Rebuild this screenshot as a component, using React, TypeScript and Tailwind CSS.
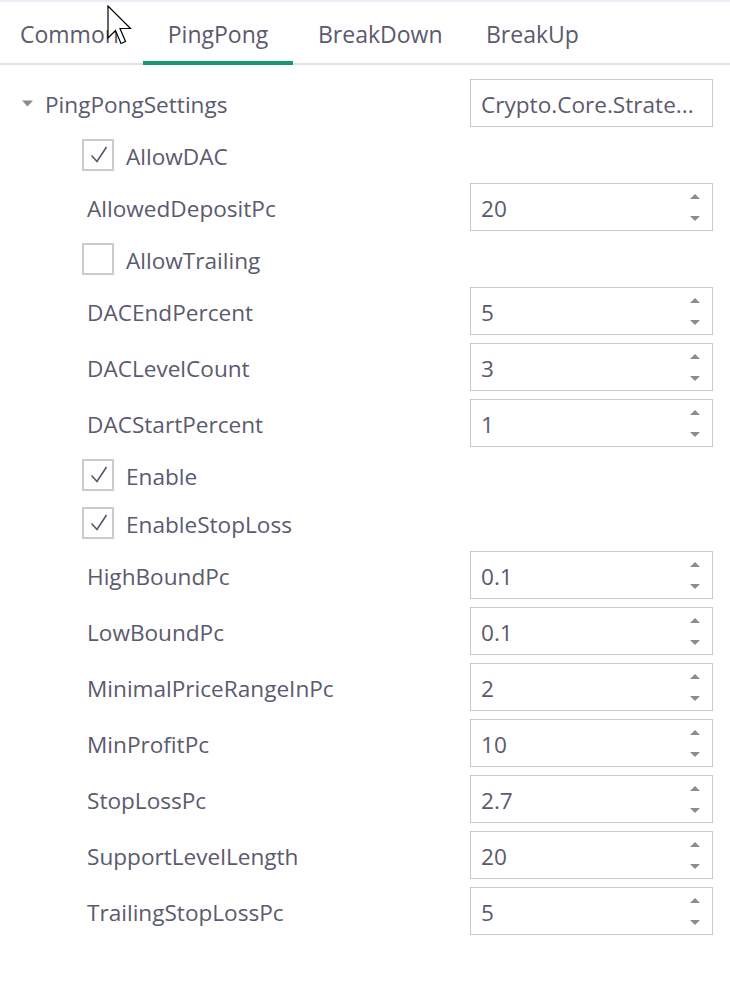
import React from "react";

const font = { fontFamily: '"Open Sans", "Noto Sans", sans-serif' };

type Row =
  | { kind: "input"; label: string; value: string }
  | { kind: "check"; label: string; checked: boolean };

const rows: Row[] = [
  { kind: "check", label: "AllowDAC", checked: true },
  { kind: "input", label: "AllowedDepositPc", value: "20" },
  { kind: "check", label: "AllowTrailing", checked: false },
  { kind: "input", label: "DACEndPercent", value: "5" },
  { kind: "input", label: "DACLevelCount", value: "3" },
  { kind: "input", label: "DACStartPercent", value: "1" },
  { kind: "check", label: "Enable", checked: true },
  { kind: "check", label: "EnableStopLoss", checked: true },
  { kind: "input", label: "HighBoundPc", value: "0.1" },
  { kind: "input", label: "LowBoundPc", value: "0.1" },
  { kind: "input", label: "MinimalPriceRangeInPc", value: "2" },
  { kind: "input", label: "MinProfitPc", value: "10" },
  { kind: "input", label: "StopLossPc", value: "2.7" },
  { kind: "input", label: "SupportLevelLength", value: "20" },
  { kind: "input", label: "TrailingStopLossPc", value: "5" },
];

function Spinner() {
  return (
    <div className="absolute right-[12px] top-0 flex h-full w-[10px] flex-col">
      <svg width="10" height="5" viewBox="0 0 10 5" className="mt-[10px]">
        <polygon points="5,0 10,5 0,5" fill="#8b8b92" />
      </svg>
      <svg width="10" height="5" viewBox="0 0 10 5" className="mt-[17px]">
        <polygon points="0,0 10,0 5,5" fill="#8b8b92" />
      </svg>
    </div>
  );
}

function NumberBox({ value }: { value: string }) {
  return (
    <div className="relative flex h-[48px] w-[243px] items-center border border-[#c9c9c9] pl-[10px] pt-[4px] text-[#5b5a6e]">
      <span>{value}</span>
      <Spinner />
    </div>
  );
}

function CheckBox({ checked }: { checked: boolean }) {
  return (
    <div className="flex h-[32px] w-[32px] items-center justify-center border-2 border-[#cbcbcb] bg-white">
      {checked && (
        <svg width="28" height="28" viewBox="0 0 28 28">
          <polyline
            points="7.5,14.5 13,20.5 22.5,6"
            fill="none"
            stroke="#55566a"
            strokeWidth="1.6"
          />
        </svg>
      )}
    </div>
  );
}

export default function App() {
  return (
    <div
      className="relative h-[1004px] w-[730px] overflow-hidden border-t-2 border-[#e9eef7] bg-white text-[#5b5a6e]"
      style={font}
    >
      {/* tabs */}
      <div className="flex h-[63px] border-b-2 border-[#e3e3e3] text-[23px]">
        <div className="flex w-[143px] items-center pl-[20px] pt-[4px]">Common</div>
        <div className="relative flex w-[150px] items-center justify-center pt-[4px]">
          PingPong
          <div className="absolute bottom-[-2px] left-0 h-[4px] w-full bg-[#17996b]" />
        </div>
        <div className="flex w-[169px] items-center pl-[25px] pt-[4px]">BreakDown</div>
        <div className="flex items-center pl-[24px] pt-[4px]">BreakUp</div>
      </div>

      {/* tree */}
      <div className="pt-[10px] text-[22.6px]">
        <div className="flex h-[56px] items-center">
          <div className="flex w-[45px] items-center pl-[22px]">
            <svg width="11" height="7" viewBox="0 0 11 7">
              <polygon points="0,0.5 11,0.5 5.5,6.5" fill="#8a8a8f" />
            </svg>
          </div>
          <div className="flex-1 pt-[4px]">PingPongSettings</div>
          <div className="mr-[17px] flex h-[48px] w-[243px] items-center overflow-hidden whitespace-nowrap border border-[#c9c9c9] pl-[10px] pt-[4px]">
            Crypto.Core.Strate...
          </div>
        </div>

        {rows.map((r) =>
          r.kind === "input" ? (
            <div key={r.label} className="flex h-[56px] items-center">
              <div className="flex-1 pl-[87px] pt-[4px]">{r.label}</div>
              <div className="mr-[17px]">
                <NumberBox value={r.value} />
              </div>
            </div>
          ) : (
            <div key={r.label} className="flex h-[48px] items-center pl-[82px]">
              <CheckBox checked={r.checked} />
              <span className="ml-[12px] pt-[4px]">{r.label}</span>
            </div>
          )
        )}
      </div>

      {/* mouse cursor */}
      <svg
        className="absolute left-[107px] top-[3px]"
        width="26"
        height="42"
        viewBox="0 0 26 42"
      >
        <path
          d="M1 1 L1 33 L8.5 25.5 L14 38.5 L18.5 36.5 L13 23.5 L23.5 23.5 Z"
          fill="#ffffff"
          stroke="#000000"
          strokeWidth="1.2"
          strokeLinejoin="miter"
        />
      </svg>
    </div>
  );
}
